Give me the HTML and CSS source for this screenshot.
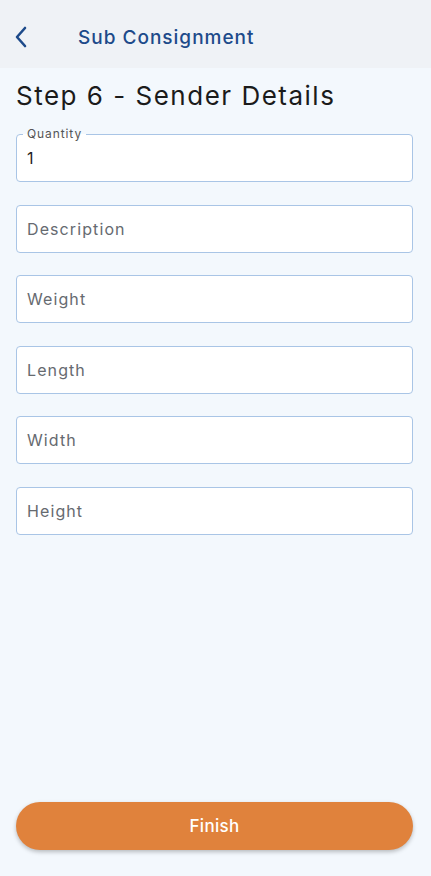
FILE: index.html
```html
<!DOCTYPE html>
<html>
<head>
<meta charset="utf-8">
<link rel="stylesheet" href="styles.css">
</head>
<body>
<div class="app">
  <header class="topbar">
    <button class="back" aria-label="Back">
      <svg width="14" height="22" viewBox="0 0 14 22"><path d="M11 2 L3 11 L11 20" fill="none" stroke="#1d4a8a" stroke-width="2.6" stroke-linecap="round" stroke-linejoin="round"/></svg>
    </button>
    <h1 class="title">Sub Consignment</h1>
  </header>
  <main class="content">
    <h2 class="step">Step 6 - Sender Details</h2>
    <form class="fields">
      <div class="field filled">
        <span class="label">Quantity</span>
        <span class="value">1</span>
      </div>
      <div class="field"><span class="placeholder">Description</span></div>
      <div class="field"><span class="placeholder">Weight</span></div>
      <div class="field"><span class="placeholder">Length</span></div>
      <div class="field"><span class="placeholder">Width</span></div>
      <div class="field"><span class="placeholder">Height</span></div>
    </form>
    <div class="spacer"></div>
    <button class="finish">Finish</button>
  </main>
</div>
</body>
</html>
```
FILE: styles.css
```css
* { box-sizing: border-box; }
html, body { margin: 0; padding: 0; }
body {
  font-family: "Inter", "Noto Sans", sans-serif;
  background: #f3f8fd;
  width: 431px;
  height: 876px;
  overflow: hidden;
}
.app {
  display: flex;
  flex-direction: column;
  height: 876px;
}
.topbar {
  height: 68px;
  background: #eff2f6;
  display: flex;
  align-items: center;
  padding-left: 14px;
  padding-top: 6px;
}
.back {
  background: none;
  border: none;
  padding: 0;
  width: 16px;
  height: 22px;
  display: flex;
  align-items: center;
}
.title {
  margin: 0 0 0 48px;
  font-size: 19px;
  font-weight: 500;
  color: #1d4a8a;
  letter-spacing: 1px;
}
.content {
  flex: 1;
  display: flex;
  flex-direction: column;
  padding: 12px 18px 26px 16px;
}
.step {
  margin: 0;
  font-size: 26px;
  font-weight: 400;
  color: #1b1b1b;
  line-height: 32px;
  letter-spacing: 1.5px;
}
.fields {
  display: flex;
  flex-direction: column;
  gap: 22.6px;
  margin-top: 22px;
}
.field {
  position: relative;
  height: 48px;
  background: #ffffff;
  border: 1.5px solid #a9c5e6;
  border-radius: 4px;
  display: flex;
  align-items: center;
  padding-left: 10px;
}
.placeholder {
  font-size: 16px;
  color: #666a70;
  letter-spacing: 1.1px;
}
.label {
  position: absolute;
  top: -8px;
  left: 6px;
  padding: 0 4px;
  font-size: 12px;
  color: #555;
  line-height: 14px;
  letter-spacing: 0.9px;
  background: linear-gradient(to bottom, #f3f8fd 50%, #ffffff 50%);
}
.value {
  font-size: 16px;
  color: #222;
  margin-top: -1px;
}
.spacer { flex: 1; }
.finish {
  height: 48px;
  border: none;
  border-radius: 24px;
  background: #e0823c;
  color: #fff;
  font-family: inherit;
  font-size: 17px;
  font-weight: 500;
  letter-spacing: 0.3px;
  box-shadow: 0 2px 4px rgba(0,0,0,0.25);
}
```
